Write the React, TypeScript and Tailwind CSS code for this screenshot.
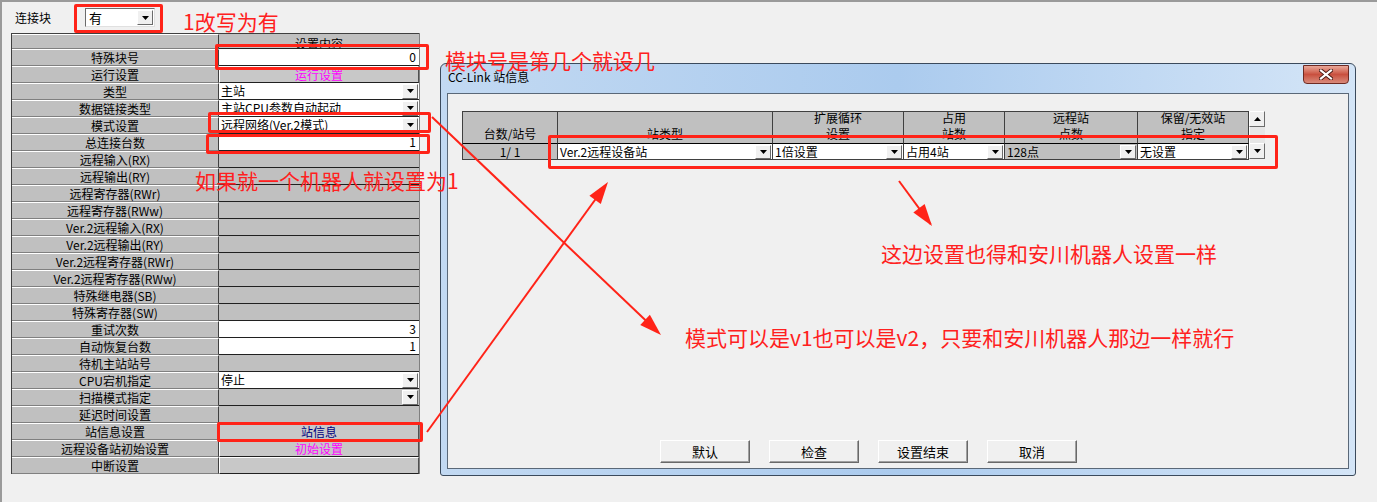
import React from 'react';

type Kind = 'input' | 'select' | 'graySelect' | 'button' | 'gray' | 'head';

interface RowDef {
  label: string;
  kind: Kind;
  value?: string;
  color?: string;
}

const rows: RowDef[] = [
  { label: '', kind: 'head', value: '设置内容' },
  { label: '特殊块号', kind: 'input', value: '0' },
  { label: '运行设置', kind: 'button', value: '运行设置', color: 'text-[#ff00ff]' },
  { label: '类型', kind: 'select', value: '主站' },
  { label: '数据链接类型', kind: 'select', value: '主站CPU参数自动起动' },
  { label: '模式设置', kind: 'select', value: '远程网络(Ver.2模式)' },
  { label: '总连接台数', kind: 'input', value: '1' },
  { label: '远程输入(RX)', kind: 'gray' },
  { label: '远程输出(RY)', kind: 'gray' },
  { label: '远程寄存器(RWr)', kind: 'gray' },
  { label: '远程寄存器(RWw)', kind: 'gray' },
  { label: 'Ver.2远程输入(RX)', kind: 'gray' },
  { label: 'Ver.2远程输出(RY)', kind: 'gray' },
  { label: 'Ver.2远程寄存器(RWr)', kind: 'gray' },
  { label: 'Ver.2远程寄存器(RWw)', kind: 'gray' },
  { label: '特殊继电器(SB)', kind: 'gray' },
  { label: '特殊寄存器(SW)', kind: 'gray' },
  { label: '重试次数', kind: 'input', value: '3' },
  { label: '自动恢复台数', kind: 'input', value: '1' },
  { label: '待机主站站号', kind: 'gray' },
  { label: 'CPU宕机指定', kind: 'select', value: '停止' },
  { label: '扫描模式指定', kind: 'graySelect' },
  { label: '延迟时间设置', kind: 'gray' },
  { label: '站信息设置', kind: 'button', value: '站信息', color: 'text-[#000080]' },
  { label: '远程设备站初始设置', kind: 'button', value: '初始设置', color: 'text-[#ff00ff]' },
  { label: '中断设置', kind: 'button' },
];

const DropBtn = ({ h = 'h-[15px]' }: { h?: string }) => (
  <div className={`w-[16px] ${h} shrink-0 flex items-center justify-center bg-[#f0f0f0] border border-t-white border-l-white border-b-[#6b6b6b] border-r-[#6b6b6b]`}>
    <svg width="7" height="4" viewBox="0 0 7 4"><polygon points="0,0 7,0 3.5,4" fill="#000" /></svg>
  </div>
);

const UpBtn = () => (
  <div className="w-[16px] h-[16px] flex items-center justify-center bg-[#f0f0f0] border border-t-white border-l-white border-b-[#6b6b6b] border-r-[#6b6b6b]">
    <svg width="7" height="4" viewBox="0 0 7 4"><polygon points="0,4 7,4 3.5,0" fill="#000" /></svg>
  </div>
);

const ValueCell = ({ row }: { row: RowDef }) => {
  const base = 'w-[201px] h-full flex items-center overflow-hidden border-b border-b-[#202020]';
  switch (row.kind) {
    case 'head':
      return <div className={`${base} justify-center bg-[#c0c0c0] pt-[5px]`}>{row.value}</div>;
    case 'input':
      return <div className={`${base} justify-end bg-white pr-[3px]`}>{row.value}</div>;
    case 'select':
      return (
        <div className={`${base} justify-between bg-white pl-[2px] pr-[1px]`}>
          <span>{row.value}</span>
          <DropBtn />
        </div>
      );
    case 'graySelect':
      return (
        <div className={`${base} justify-end bg-[#c0c0c0] pr-[1px]`}>
          <DropBtn />
        </div>
      );
    case 'button':
      return (
        <div className={`${base} justify-center bg-[#c8c8c8] border-t border-t-white border-l border-l-white border-r border-r-[#505050] ${row.color ?? ''}`}>
          {row.value}
        </div>
      );
    default:
      return <div className={`${base} bg-[#c0c0c0]`} />;
  }
};

const headers: { w: string; lines: string[] }[] = [
  { w: 'w-[95px]', lines: ['台数/站号'] },
  { w: 'w-[215px]', lines: ['站类型'] },
  { w: 'w-[131px]', lines: ['扩展循环', '设置'] },
  { w: 'w-[101px]', lines: ['占用', '站数'] },
  { w: 'w-[133px]', lines: ['远程站', '点数'] },
  { w: 'w-[111px]', lines: ['保留/无效站', '指定'] },
];

const DlgSelect = ({ w, text, gray }: { w: string; text: string; gray?: boolean }) => (
  <div className={`${w} h-full flex items-center justify-between pl-[2px] pr-[1px] border-r border-r-[#404040] ${gray ? 'bg-[#c0c0c0]' : 'bg-white'}`}>
    <span>{text}</span>
    <DropBtn h="h-[14px]" />
  </div>
);

const WinButton = ({ label }: { label: string }) => (
  <div className="w-[90px] h-[23px] flex items-center justify-center bg-[#f0f0f0] border border-t-white border-l-white border-b-[#696969] border-r-[#696969] shadow-[inset_-1px_-1px_0_#a0a0a0] text-[13px]">
    {label}
  </div>
);

const RedBox = ({ cls }: { cls: string }) => (
  <div className={`absolute border-[3px] border-[#ff2318] rounded-[2px] pointer-events-none ${cls}`} />
);

const Note = ({ cls, children }: { cls: string; children: React.ReactNode }) => (
  <div className={`absolute text-[21px] leading-none text-[#ff2020] whitespace-nowrap ${cls}`}>{children}</div>
);

const arrowHead = (x0: number, y0: number, x1: number, y1: number) => {
  const dx = x1 - x0;
  const dy = y1 - y0;
  const len = Math.hypot(dx, dy);
  const ux = dx / len;
  const uy = dy / len;
  const bx = x1 - ux * 22;
  const by = y1 - uy * 22;
  const px = -uy * 7;
  const py = ux * 7;
  return `${x1},${y1} ${bx + px},${by + py} ${bx - px},${by - py}`;
};

const arrows = [
  [432, 117, 661, 335],
  [427, 432, 608, 182],
  [899, 181, 932, 226],
];

export default function App() {
  return (
    <div className="relative w-[1377px] h-[502px] overflow-hidden bg-[#f0f0f0] border-t-2 border-l-2 border-[#9a9a9a] font-['Noto_Sans_CJK_SC',sans-serif] text-[12px] text-black">
      {/* 连接块 */}
      <div className="flex items-center pt-[6px] pl-[13px] h-[25px]">
        <span className="w-[70px] leading-none">连接块</span>
        <div className="w-[70px] h-[19px] flex items-center justify-between bg-white border border-t-[#6b6b6b] border-l-[#6b6b6b] border-b-[#e0e0e0] border-r-[#e0e0e0] pl-[3px] pr-[1px] text-[13px]">
          <span>有</span>
          <DropBtn />
        </div>
      </div>

      {/* 参数表 */}
      <div className="mt-[6px] ml-[9px] w-[409px] border-l border-l-[#404040] border-r border-r-[#808080] leading-none">
        {rows.map((r, i) => (
          <div key={i} className={`flex ${i === 0 ? 'h-[16px] border-t border-t-[#404040]' : 'h-[17px]'}`}>
            <div className="w-[208px] h-full flex items-center justify-center bg-[#c0c0c0] border-t border-t-white border-b border-b-[#808080] border-r border-r-[#404040]">
              {r.label}
            </div>
            <ValueCell row={r} />
          </div>
        ))}
      </div>

      {/* CC-Link 站信息 窗口 */}
      <div className="absolute left-[438px] top-[61px] w-[916px] h-[413px] flex flex-col rounded-t-[6px] rounded-b-[3px] border border-[#3b4a5c] bg-linear-to-r from-[#c2d9f2] via-[#abcbee] to-[#d4e5f7]">
        <div className="h-[29px] flex items-start justify-between shrink-0">
          <span className="pl-[7px] pt-[7px] text-[12px] leading-none">CC-Link 站信息</span>
          <div className="mr-[6px] mt-[1px] w-[46px] h-[19px] flex items-center justify-center rounded-b-[4px] border border-[#6e2a22] bg-linear-to-b from-[#e9a89a] via-[#c9503f] to-[#d88a7b]">
            <svg width="14" height="11" viewBox="0 0 14 11">
              <path d="M2 1.5 L12 9.5 M12 1.5 L2 9.5" stroke="#4a1a14" strokeWidth="4" strokeLinecap="square" />
              <path d="M2 1.5 L12 9.5 M12 1.5 L2 9.5" stroke="#fff" strokeWidth="2.2" strokeLinecap="square" />
            </svg>
          </div>
        </div>
        <div className="flex-1 mx-[6px] mb-[6px] flex flex-col border border-[#5a6878] bg-[#f0f0f0]">
          <div className="mt-[17px] ml-[14px] flex leading-none">
            <div className="flex flex-col border-t border-t-[#404040] border-l border-l-[#404040]">
              <div className="flex h-[32px]">
                {headers.map((h, i) => (
                  <div key={i} className={`${h.w} h-full flex flex-col items-center justify-end bg-[#c0c0c0] border-r border-r-[#404040] border-b border-b-black pb-[1px]`}>
                    {h.lines.map((l, j) => (
                      <span key={j} className="h-[16px] leading-[16px]">{l}</span>
                    ))}
                  </div>
                ))}
              </div>
              <div className="flex h-[16px] border-b border-b-[#404040]">
                <div className="w-[95px] h-full flex items-center justify-center bg-[#c0c0c0] border-r border-r-[#404040]">1/ 1</div>
                <DlgSelect w="w-[215px]" text="Ver.2远程设备站" />
                <DlgSelect w="w-[131px]" text="1倍设置" />
                <DlgSelect w="w-[101px]" text="占用4站" />
                <DlgSelect w="w-[133px]" text="128点" gray />
                <DlgSelect w="w-[111px]" text="无设置" />
              </div>
            </div>
            <div className="w-[16px] flex flex-col">
              <UpBtn />
              <div className="h-[16px] bg-[#e6e6e6] border-l border-l-white" />
              <DropBtn h="h-[16px]" />
            </div>
          </div>
          <div className="mt-auto mb-[5px] ml-[212px] flex gap-[19px]">
            <WinButton label="默认" />
            <WinButton label="检查" />
            <WinButton label="设置结束" />
            <WinButton label="取消" />
          </div>
        </div>
      </div>

      {/* 标注 */}
      <RedBox cls="left-[72px] top-[2px] w-[89px] h-[29px]" />
      <RedBox cls="left-[213px] top-[42px] w-[214px] h-[26px]" />
      <RedBox cls="left-[206px] top-[110px] w-[223px] h-[21px]" />
      <RedBox cls="left-[204px] top-[132px] w-[224px] h-[20px]" />
      <RedBox cls="left-[215px] top-[420px] w-[206px] h-[20px]" />
      <RedBox cls="left-[546px] top-[133px] w-[730px] h-[34px]" />

      <Note cls="left-[181px] top-[9px]">1改写为有</Note>
      <Note cls="left-[443px] top-[48px]">模块号是第几个就设几</Note>
      <Note cls="left-[193px] top-[168px]">如果就一个机器人就设置为1</Note>
      <Note cls="left-[879px] top-[241px]">这边设置也得和安川机器人设置一样</Note>
      <Note cls="left-[683px] top-[325px]">模式可以是v1也可以是v2，只要和安川机器人那边一样就行</Note>

      <svg className="absolute left-[-2px] top-[-2px] pointer-events-none" width="1377" height="502">
        {arrows.map(([x0, y0, x1, y1], i) => (
          <g key={i}>
            <line x1={x0} y1={y0} x2={x1 - (x1 - x0) * 0.04} y2={y1 - (y1 - y0) * 0.04} stroke="#ff2318" strokeWidth="2" />
            <polygon points={arrowHead(x0, y0, x1, y1)} fill="#ff2318" />
          </g>
        ))}
      </svg>
    </div>
  );
}
